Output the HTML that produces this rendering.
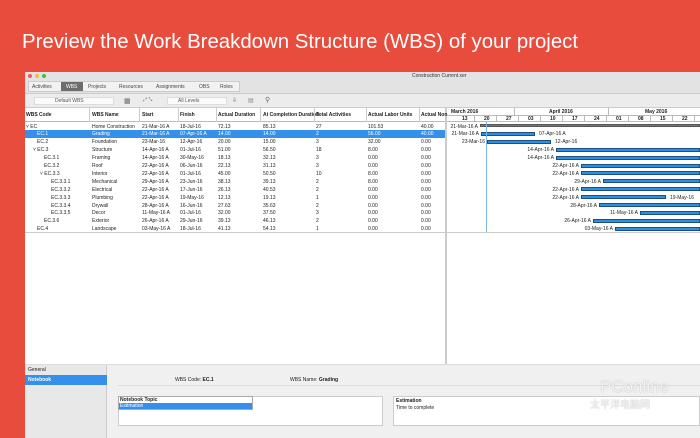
<!DOCTYPE html>
<html><head><meta charset="utf-8"><style>
*{margin:0;padding:0;box-sizing:border-box}
body{width:700px;height:438px;overflow:hidden;background:#e84c3d;font-family:"Liberation Sans",sans-serif;position:relative}
.a{position:absolute;white-space:nowrap}
.t{font-size:5px;color:#222}
.b{font-weight:bold}
.bar{position:absolute;height:4px;background:#2e8fe0;border:1px solid #1a4f80}
</style></head><body>
<div class="a" style="left:22px;top:31px;font-size:20.4px;color:#fff">Preview the Work Breakdown Structure (WBS) of your project</div>
<div class="a" style="left:25px;top:72px;width:675px;height:366px;background:#fff"></div>
<div class="a" style="left:25px;top:72px;width:675px;height:22px;background:#e4e3e4;border-bottom:1px solid #ccc"></div>
<div class="a" style="left:28px;top:74px;width:4px;height:4px;border-radius:50%;background:#f05a50"></div>
<div class="a" style="left:35px;top:74px;width:4px;height:4px;border-radius:50%;background:#f4be30"></div>
<div class="a" style="left:42px;top:74px;width:4px;height:4px;border-radius:50%;background:#3cc44a"></div>
<div class="a t" style="left:412px;top:73px;color:#333">Construction Current.xer</div>
<div class="a" style="left:28px;top:81px;width:212px;height:11px;background:#f2f2f2;border:1px solid #ccc"></div>
<div class="a t" style="left:32px;top:84px;color:#444">Activities</div>
<div class="a" style="left:61px;top:82px;width:22px;height:9px;background:#6d6d6d"></div>
<div class="a t" style="left:66px;top:84px;color:#fff">WBS</div>
<div class="a t" style="left:88px;top:84px;color:#444">Projects</div>
<div class="a t" style="left:119px;top:84px;color:#444">Resources</div>
<div class="a t" style="left:156px;top:84px;color:#444">Assignments</div>
<div class="a t" style="left:199px;top:84px;color:#444">OBS</div>
<div class="a t" style="left:220px;top:84px;color:#444">Roles</div>
<div class="a" style="left:25px;top:94px;width:675px;height:14px;background:#ececec;border-bottom:1px solid #ccc"></div>
<div class="a" style="left:34px;top:97px;width:80px;height:8px;background:#fafafa;border:1px solid #ddd"></div>
<div class="a t" style="left:55px;top:98px;color:#555">Default WBS</div>
<div class="a" style="left:167px;top:97px;width:60px;height:8px;background:#fafafa;border:1px solid #ddd"></div>
<div class="a t" style="left:178px;top:98px;color:#555">All Levels</div>
<div class="a t" style="left:124px;top:97px;color:#666;font-size:7px">▦</div>
<div class="a t" style="left:143px;top:97px;color:#666">⤢ ⤡</div>
<div class="a t" style="left:232px;top:97px;color:#666;font-size:6px">⇩</div>
<div class="a t" style="left:248px;top:97px;color:#888;font-size:6px">▤</div>
<div class="a t" style="left:265px;top:96px;color:#666;font-size:7px">⚲</div>
<div class="a" style="left:25px;top:108px;width:420px;height:14px;background:#fff;border-bottom:1px solid #bbb"></div>
<div class="a" style="left:445px;top:108px;width:2px;height:256px;background:#ccc"></div>
<div id="tbl"></div>
<div class="a" style="left:447px;top:108px;width:253px;height:14px;border-bottom:1px solid #bbb"></div>
<div class="a t b" style="left:451px;top:109px">March 2016</div>
<div class="a t b" style="left:549px;top:109px">April 2016</div>
<div class="a t b" style="left:645px;top:109px">May 2016</div>
<div class="a" style="left:447px;top:115px;width:253px;height:1px;background:#bbb"></div>
<div class="a" style="left:514px;top:108px;width:1px;height:7px;background:#bbb"></div>
<div class="a" style="left:608px;top:108px;width:1px;height:7px;background:#bbb"></div>
<div id="g"></div>
<div class="a" style="left:486px;top:122px;width:1px;height:110px;background:#7bb8f0"></div>
<div class="a" style="left:25px;top:232px;width:675px;height:1px;background:#ccc"></div>
<div class="a" style="left:25px;top:364px;width:675px;height:74px;background:#f0f0f0;border-top:1px solid #ddd"></div>
<div class="a" style="left:25px;top:365px;width:82px;height:73px;background:#e8e8e8;border-right:1px solid #ccc"></div>
<div class="a t" style="left:28px;top:367px">General</div>
<div class="a" style="left:25px;top:375px;width:82px;height:10px;background:#3490ea"></div>
<div class="a t b" style="left:28px;top:377px;color:#fff">Notebook</div>
<div class="a t" style="left:175px;top:377px">WBS Code: <b>EC.1</b></div>
<div class="a t" style="left:290px;top:377px">WBS Name: <b>Grading</b></div>
<div class="a" style="left:118px;top:385px;width:582px;height:1px;background:#ddd"></div>
<div class="a" style="left:118px;top:396px;width:265px;height:30px;background:#fff;border:1px solid #ccc"></div>
<div class="a" style="left:118px;top:396px;width:135px;height:14px;border:1px solid #aaa;background:#fff"></div>
<div class="a t b" style="left:120px;top:397px">Notebook Topic</div>
<div class="a" style="left:119px;top:403px;width:133px;height:6px;background:#3490ea"></div>
<div class="a t" style="left:120px;top:403px;color:#fff">Estimation</div>
<div class="a" style="left:393px;top:396px;width:307px;height:30px;background:#fff;border:1px solid #ccc"></div>
<div class="a t b" style="left:396px;top:398px">Estimation</div>
<div class="a t" style="left:396px;top:405px">Time to complete</div>
<div class="a" style="left:600px;top:377px;font-size:17px;color:rgba(255,255,255,.85);text-shadow:0 0 1px #999">PConline</div>
<div class="a" style="left:590px;top:396px;font-size:10px;color:rgba(255,255,255,.85);text-shadow:0 0 1px #999;font-family:'Noto Sans CJK SC',sans-serif">太平洋电脑网</div>
<script>
var cols=[26,92,142,180,218,263,316,368,421],seps=[89,139,178,216,260,314,366,419];
var hd=["WBS Code","WBS Name","Start","Finish","Actual Duration","At Completion Duration","Total Activities","Actual Labor Units","Actual Non"];
var rows=[["EC","Home Construction","21-Mar-16 A","18-Jul-16","72.13","85.13","27","101.53","40.00",0,1],
["EC.1","Grading","21-Mar-16 A","07-Apr-16 A","14.00","14.00","2","56.00","40.00",1,0],
["EC.2","Foundation","23-Mar-16","12-Apr-16","20.00","15.00","3","32.00","0.00",1,0],
["EC.3","Structure","14-Apr-16 A","01-Jul-16","51.00","56.50","18","8.00","0.00",1,1],
["EC.3.1","Framing","14-Apr-16 A","30-May-16","18.13","32.13","3","0.00","0.00",2,0],
["EC.3.2","Roof","22-Apr-16 A","06-Jun-16","22.13","31.13","3","0.00","0.00",2,0],
["EC.3.3","Interior","22-Apr-16 A","01-Jul-16","45.00","50.50","10","8.00","0.00",2,1],
["EC.3.3.1","Mechanical","29-Apr-16 A","23-Jun-16","38.13","39.13","2","8.00","0.00",3,0],
["EC.3.3.2","Electrical","22-Apr-16 A","17-Jun-16","26.13","40.53","2","0.00","0.00",3,0],
["EC.3.3.3","Plumbing","22-Apr-16 A","19-May-16","12.13","19.13","1","0.00","0.00",3,0],
["EC.3.3.4","Drywall","28-Apr-16 A","16-Jun-16","27.63","35.63","2","0.00","0.00",3,0],
["EC.3.3.5","Decor","11-May-16 A","01-Jul-16","32.00","37.50","3","0.00","0.00",3,0],
["EC.3.6","Exterior","26-Apr-16 A","29-Jun-16","39.13","46.13","2","0.00","0.00",2,0],
["EC.4","Landscape","03-May-16 A","18-Jul-16","41.13","54.13","1","0.00","0.00",1,0]];
var h="";
hd.forEach(function(t,i){h+='<div class="a t b" style="left:'+cols[i]+'px;top:112px">'+t+'</div>'});
seps.forEach(function(x){h+='<div class="a" style="left:'+x+'px;top:108px;width:1px;height:14px;background:#ccc"></div>'});
rows.forEach(function(r,k){var y=122+k*7.9;
 if(k==1)h+='<div class="a" style="left:25px;top:'+y+'px;width:420px;height:7.9px;background:#3490ea"></div>';
 var c=k==1?'#fff':'#222';
 for(var i=0;i<9;i++){var x=cols[i];var txt=r[i];
  if(i==0){x=26+r[9]*7+(r[10]?0:4);if(r[10])txt='˅ '+txt;}
  h+='<div class="a t" style="left:'+x+'px;top:'+(y+1.5)+'px;color:'+c+'">'+txt+'</div>';}
});
document.getElementById('tbl').innerHTML=h;
var g="",wk=["13","20","27","03","10","17","24","01","08","15","22"];
wk.forEach(function(w,i){var x=454+i*22;g+='<div class="a t b" style="left:'+(x+8)+'px;top:116px">'+w+'</div><div class="a" style="left:'+(x+20)+'px;top:115px;width:1px;height:7px;background:#bbb"></div>'});
var bars=[[480,700,"21-Mar-16 A","",1],[481,535,"21-Mar-16 A","07-Apr-16 A"],[487,551,"23-Mar-16","12-Apr-16"],[556,700,"14-Apr-16 A",""],[556,700,"14-Apr-16 A",""],[581,700,"22-Apr-16 A",""],[581,700,"22-Apr-16 A",""],[603,700,"29-Apr-16 A",""],[581,700,"22-Apr-16 A",""],[581,666,"22-Apr-16 A","19-May-16"],[599,700,"28-Apr-16 A",""],[640,700,"11-May-16 A",""],[593,700,"26-Apr-16 A",""],[615,700,"03-May-16 A",""]];
bars.forEach(function(b,k){var y=122+k*7.9;
 g+='<div class="bar" style="left:'+b[0]+'px;top:'+(y+2)+'px;width:'+(b[1]-b[0])+'px;'+(b[4]?'background:#777;border-color:#555;height:3px':'')+'"></div>';
 g+='<div class="a t" style="right:'+(700-b[0]+2)+'px;top:'+(y+1.5)+'px">'+b[2]+'</div>';
 if(b[3])g+='<div class="a t" style="left:'+(b[1]+4)+'px;top:'+(y+1.5)+'px">'+b[3]+'</div>';
});
document.getElementById('g').innerHTML=g;
</script>
</body></html>
